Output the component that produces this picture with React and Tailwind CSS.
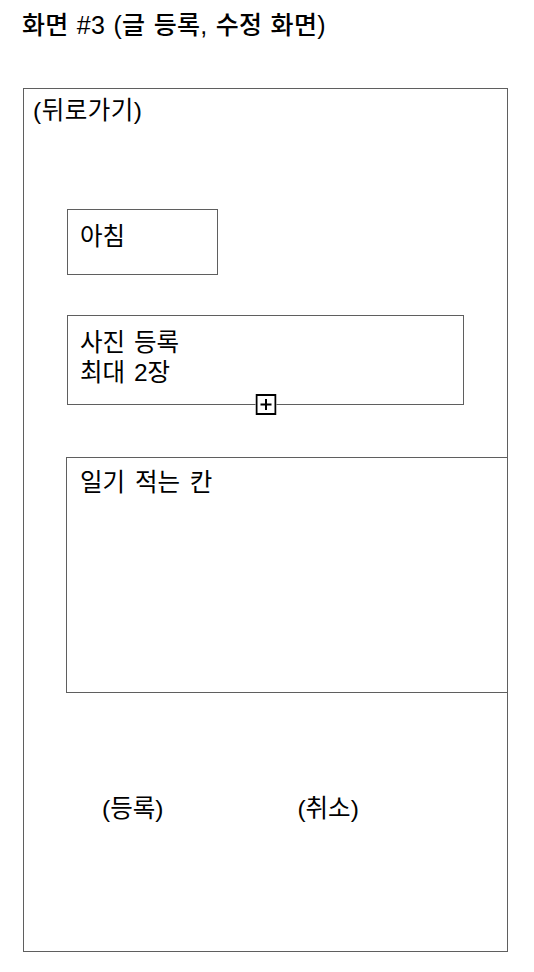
import React from 'react';

function PlusBox() {
  return (
    <svg width="21" height="21" viewBox="0 0 21 21" className="block bg-white">
      <rect x="1" y="1" width="19" height="19" fill="white" stroke="black" strokeWidth="2" />
      <line x1="10.5" y1="5" x2="10.5" y2="16" stroke="black" strokeWidth="2" />
      <line x1="5" y1="10.5" x2="16" y2="10.5" stroke="black" strokeWidth="2" />
    </svg>
  );
}

export default function App() {
  return (
    <div className="min-h-screen bg-white text-black font-['Liberation_Sans','Noto_Sans_CJK_KR',sans-serif]">
      <h1 className="pl-[22px] pt-[10px] text-[25px] leading-[30px] font-medium tracking-[0.3px] [word-spacing:1px]">
        화면 #3 (글 등록, 수정 화면)
      </h1>

      <div className="ml-[23px] mt-[48px] w-[485px] h-[864px] border border-[#5f5f5f] text-[24.5px] leading-[30px] [word-spacing:3px]">
        <p className="ml-[9px] mt-[7px] tracking-[0.5px]">(뒤로가기)</p>

        {/* meal time */}
        <div className="ml-[43px] mt-[83px] w-[151px] h-[66px] border border-[#5f5f5f] pl-[12px] pt-[12px]">
          아침
        </div>

        {/* photo upload */}
        <div className="relative ml-[43px] mt-[40px] w-[397px] h-[90px] border border-[#5f5f5f] pl-[12px] pt-[12px] [word-spacing:2px]">
          <p>사진 등록</p>
          <p>최대 2장</p>
          <div className="absolute left-1/2 -translate-x-1/2 -bottom-[11px]">
            <PlusBox />
          </div>
        </div>

        {/* diary text */}
        <div className="ml-[42px] mt-[52px] w-[442px] h-[236px] border border-[#5f5f5f] pl-[13px] pt-[10px]">
          일기 적는 칸
        </div>

        <div className="ml-[78px] mt-[101px] flex gap-[134px]">
          <span>(등록)</span>
          <span>(취소)</span>
        </div>
      </div>
    </div>
  );
}
